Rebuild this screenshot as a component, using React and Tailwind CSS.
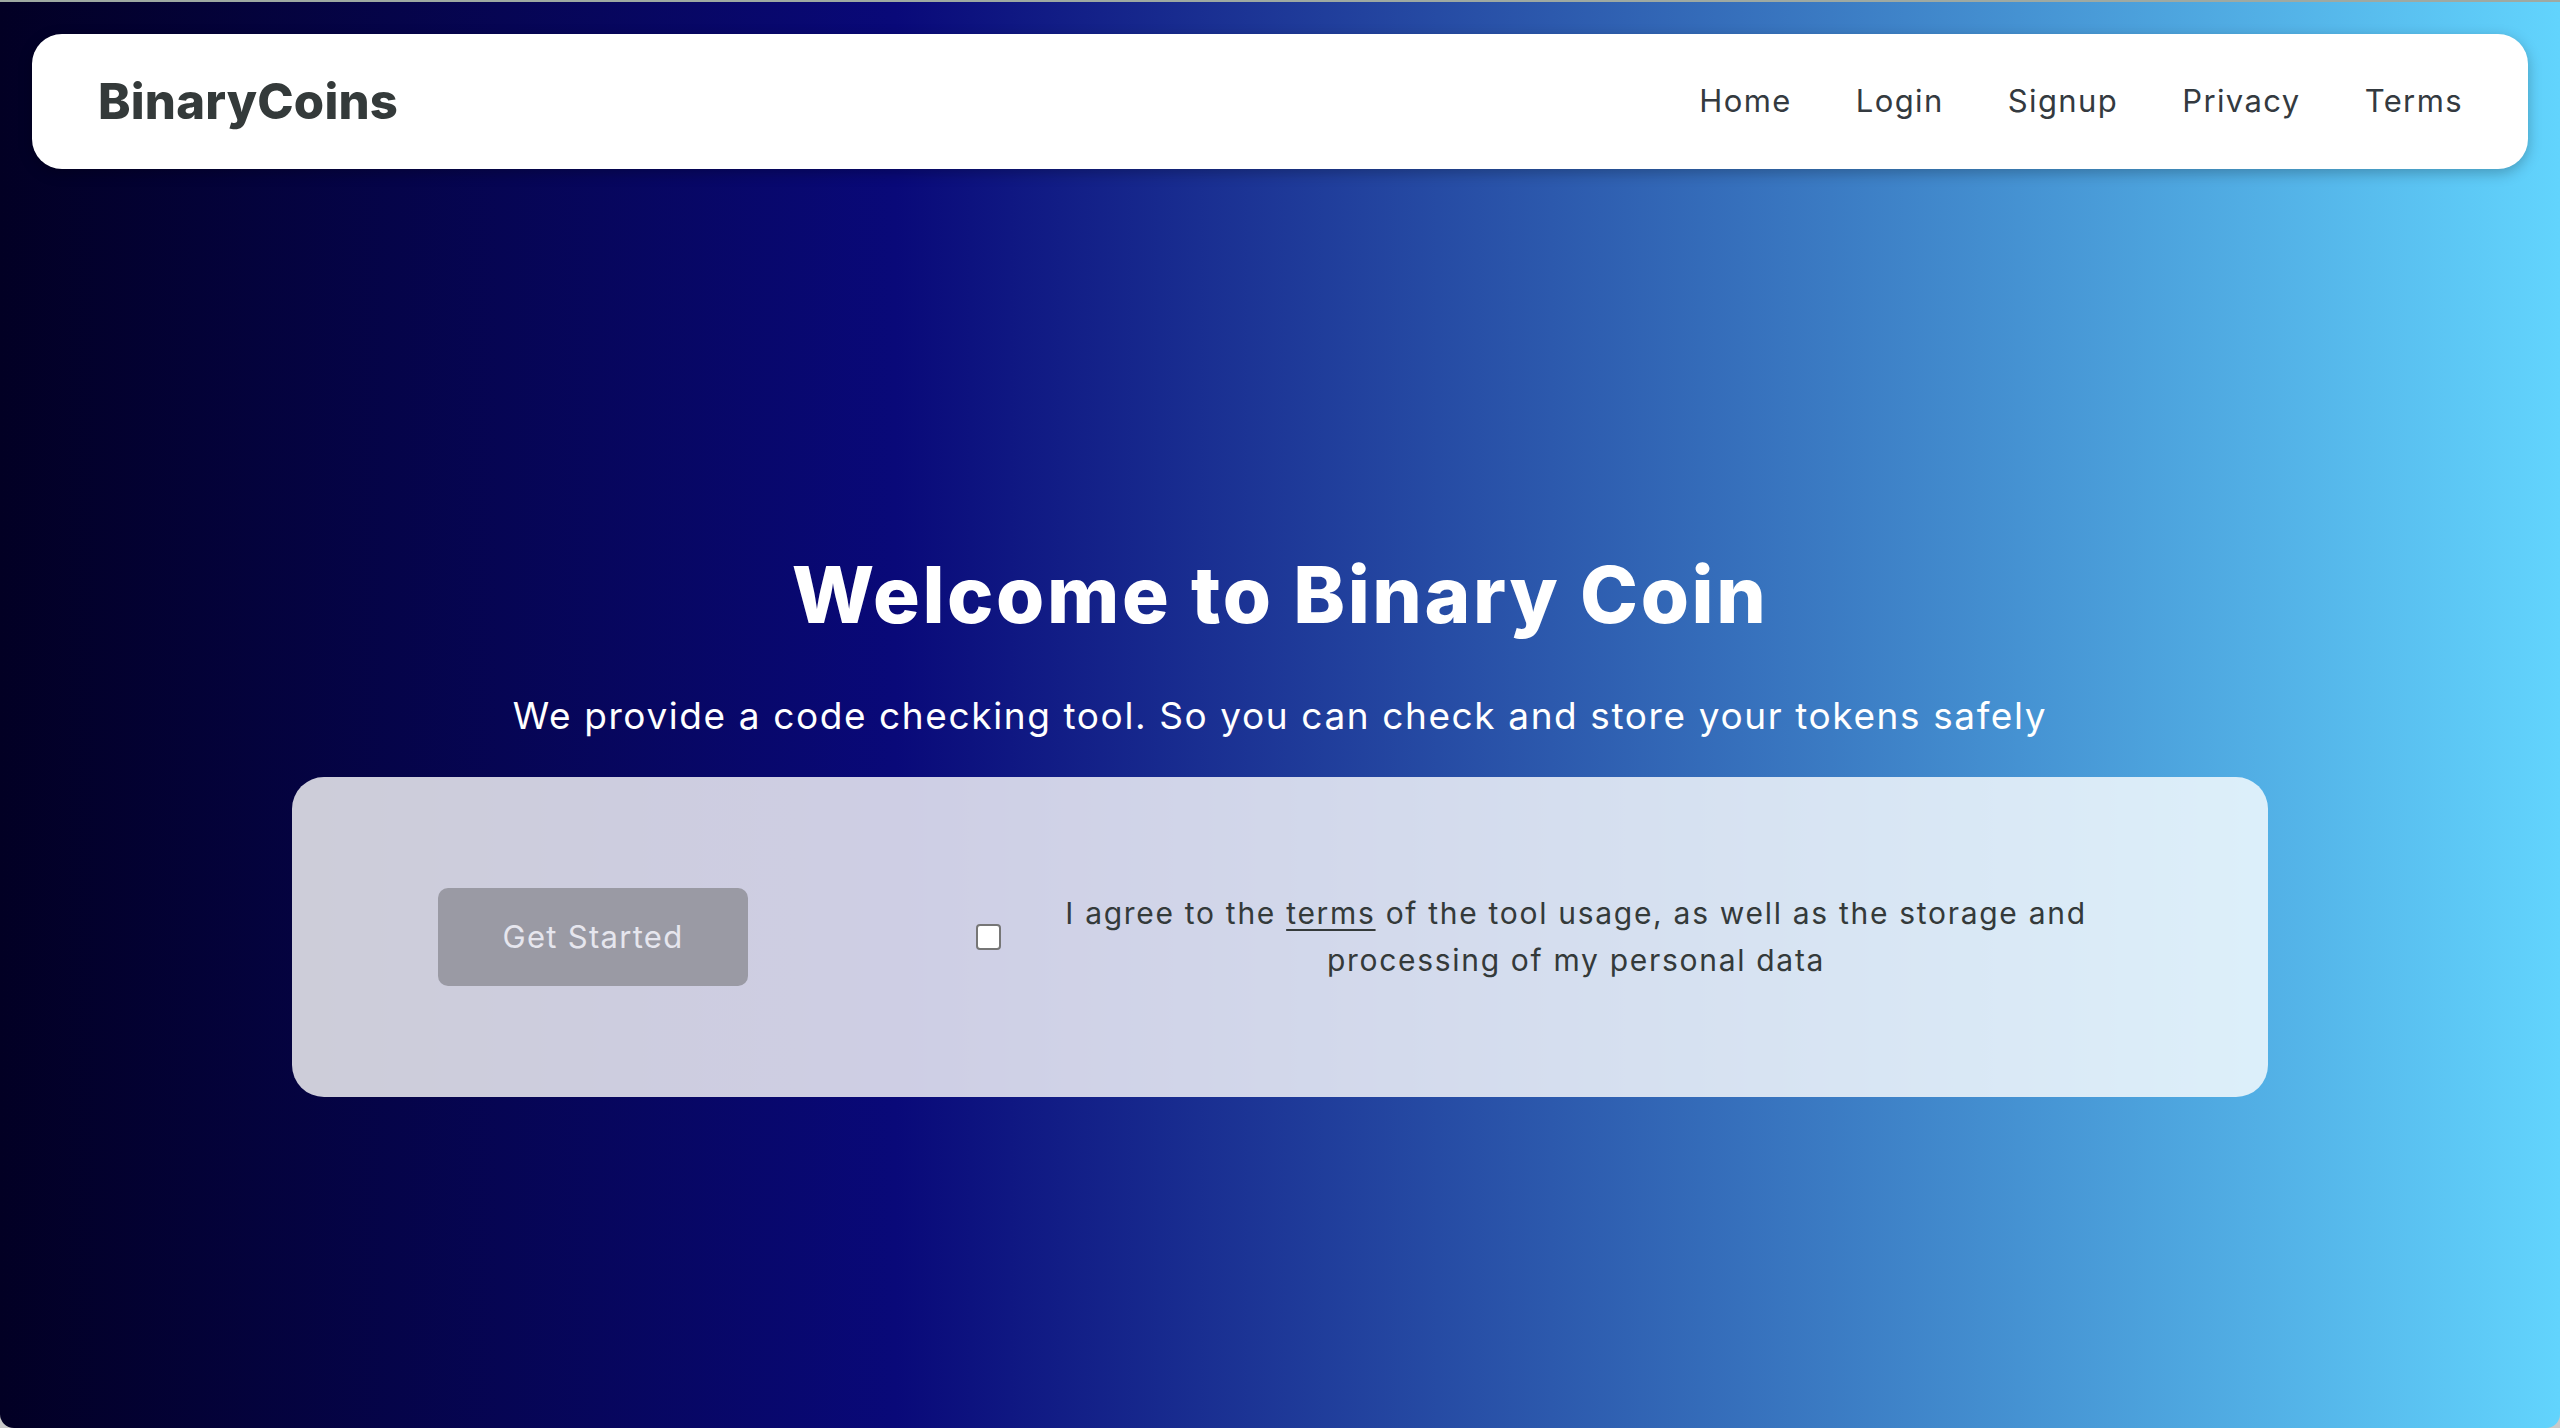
export default function App() {
  const font = { fontFamily: 'Inter, "Noto Sans", sans-serif' };
  return (
    <div className="w-full h-[1428px] bg-[#c9c9c9] flex flex-col" style={font}>
      <div className="h-[2px] w-full bg-[#9ea9a2]" />
      <div className="flex-1 flex flex-col rounded-b-[14px] bg-[linear-gradient(90deg,#020024_0%,#090979_35%,#62d4fd_100%)]">
        <nav className="mt-[32px] mx-[32px] h-[135px] bg-white rounded-[30px] shadow-[0_4px_14px_rgba(0,0,0,0.25)] flex items-center justify-between pl-[66px] pr-[65px]">
          <div className="text-[49px] font-extrabold text-[#343a3a] tracking-[0.2px]">BinaryCoins</div>
          <ul className="flex items-center gap-[64px] text-[31px] text-[#343a40] tracking-[1.4px]">
            <li>Home</li>
            <li>Login</li>
            <li>Signup</li>
            <li>Privacy</li>
            <li>Terms</li>
          </ul>
        </nav>
        <div className="flex flex-col items-center mt-[378px]">
          <h1 className="text-[78px] leading-[96px] font-extrabold text-white tracking-[2.6px]">Welcome to Binary Coin</h1>
          <p className="mt-[44px] text-[37px] leading-[57px] text-white tracking-[1.6px]">
            We provide a code checking tool. So you can check and store your tokens safely
          </p>
          <div className="mt-[33px] w-[1976px] h-[320px] rounded-[32px] bg-white/80 flex items-center pl-[146px]">
            <button className="w-[310px] h-[98px] rounded-[10px] bg-[#9a9aa4] text-[#e6e6ee] text-[31px] tracking-[1.3px]">
              Get Started
            </button>
            <div className="ml-[228px] w-[25px] h-[26px] rounded-[4px] border-2 border-[#767676] bg-white" />
            <p className="ml-[62px] w-[1026px] whitespace-nowrap text-center text-[30px] leading-[47px] text-[#343a3a] tracking-[1.7px]">
              I agree to the <span className="underline underline-offset-[5px] decoration-2">terms</span> of the tool usage, as well as the storage and
              <br />
              processing of my personal data
            </p>
          </div>
        </div>
      </div>
    </div>
  );
}
